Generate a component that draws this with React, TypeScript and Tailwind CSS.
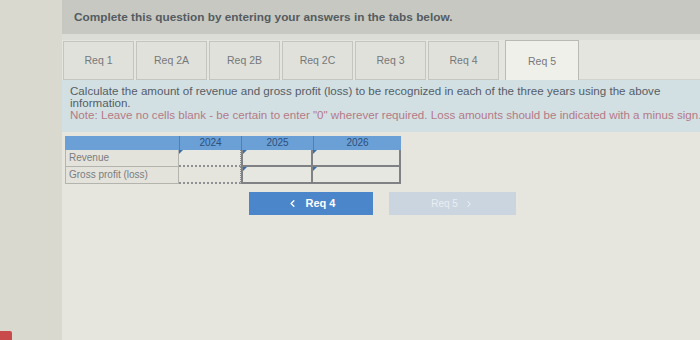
import { ChevronLeft, ChevronRight } from 'lucide-react';

const tabs = ['Req 1', 'Req 2A', 'Req 2B', 'Req 2C', 'Req 3', 'Req 4'];

export default function App() {
  return (
    <div
      className="w-[700px] h-[340px] flex overflow-hidden bg-[#e6e6df]"
      style={{ fontFamily: '"Liberation Sans", Arial, sans-serif' }}
    >
      {/* page margin */}
      <div className="w-[62px] shrink-0 h-full bg-[#d9d9cf] flex flex-col justify-end">
        <div className="w-[12px] h-[9px] bg-[#c94a4a] rounded-tr-[2px]" />
      </div>

      <div className="flex-1 min-w-0 flex flex-col overflow-hidden">
        {/* header */}
        <div className="h-[34px] bg-[#c6c8c1] pl-[12px] pt-[4px]">
          <span className="text-[11.8px] font-bold text-[#555b60]">
            Complete this question by entering your answers in the tabs below.
          </span>
        </div>
        <div className="h-[6px] bg-[#dcddd6]" />

        {/* tabs */}
        <div className="h-[40px] flex items-stretch pl-[1px] bg-[#e4e5df]">
          {tabs.map((t) => (
            <div
              key={t}
              className="w-[71px] shrink-0 mr-[2px] mt-[1px] border border-[#c4c5bf] bg-[#e0e1da] flex items-center justify-center text-[10.5px] text-[#75787a]"
            >
              {t}
            </div>
          ))}
          <div className="w-[74px] shrink-0 ml-[4px] -mb-[2px] border border-b-0 border-[#b9bab4] bg-[#f0f0ea] flex items-center justify-center text-[10.5px] text-[#75787a]">
            Req 5
          </div>
          <div className="flex-1 border-b border-[#d2d3cd]" />
        </div>

        {/* instructions */}
        <div className="h-[52px] bg-[#d2e0e3] pl-[8px] pt-[5px] text-[11.6px] leading-[12px] text-[#565d66] overflow-hidden">
          <p className="whitespace-nowrap">
            Calculate the amount of revenue and gross profit (loss) to be recognized in each of the three years using the above
          </p>
          <p>information.</p>
          <p className="whitespace-nowrap text-[#b57a86]">
            Note: Leave no cells blank - be certain to enter "0" wherever required. Loss amounts should be indicated with a minus sign.
          </p>
        </div>

        {/* table */}
        <div className="ml-[3px] mt-[4px] w-[336px] text-[10px] text-[#7a7c80]">
          <div className="flex h-[14px] bg-[#6aa0d6] text-[#2d4f7a]">
            <div className="w-[114px]" />
            <div className="w-[62px] text-center border-l border-[#4d80b8] leading-[14px]">2024</div>
            <div className="w-[72px] text-center border-l border-[#4d80b8] leading-[14px]">2025</div>
            <div className="w-[88px] text-center border-l border-[#4d80b8] leading-[14px]">2026</div>
          </div>
          {['Revenue', 'Gross profit (loss)'].map((row, i) => (
            <div key={row} className="flex h-[17px] bg-[#e3e3dc]">
              <div className="w-[114px] border border-t-0 border-[#b3b4ae] pl-[3px] leading-[16px]">{row}</div>
              <div
                className={`w-[62px] relative border-r border-[#8a8c8e] border-b-2 border-dotted border-b-[#8d8f92] ${i === 0 ? 'bg-[#e8e8e2]' : 'bg-[#e5e5de]'}`}
              >
                {i === 0 && <span className="absolute left-0 top-0 w-0 h-0 border-t-[4px] border-r-[4px] border-t-[#3a6ea8] border-r-transparent" />}
              </div>
              <div className="w-[72px] relative border-2 border-t-0 border-[#7f8184] bg-[#e7e7e1]">
                <span className="absolute left-0 top-0 w-0 h-0 border-t-[4px] border-r-[4px] border-t-[#3a6ea8] border-r-transparent" />
              </div>
              <div className="w-[88px] relative border-2 border-t-0 border-l-0 border-[#7f8184] bg-[#e7e7e1]">
                <span className="absolute left-0 top-0 w-0 h-0 border-t-[4px] border-r-[4px] border-t-[#3a6ea8] border-r-transparent" />
              </div>
            </div>
          ))}
        </div>

        {/* nav buttons */}
        <div className="flex ml-[187px] mt-[8px] gap-[16px]">
          <div className="w-[124px] h-[23px] bg-[#4a86c9] flex items-center justify-center gap-[8px] text-[11px] font-bold text-white">
            <ChevronLeft size={11} strokeWidth={3} />
            <span>Req 4</span>
          </div>
          <div className="w-[127px] h-[23px] bg-[#cbd5df] flex items-center justify-center gap-[6px] text-[10px] text-[#e9eef3]">
            <span>Req 5</span>
            <ChevronRight size={10} strokeWidth={2.5} />
          </div>
        </div>
      </div>
    </div>
  );
}
